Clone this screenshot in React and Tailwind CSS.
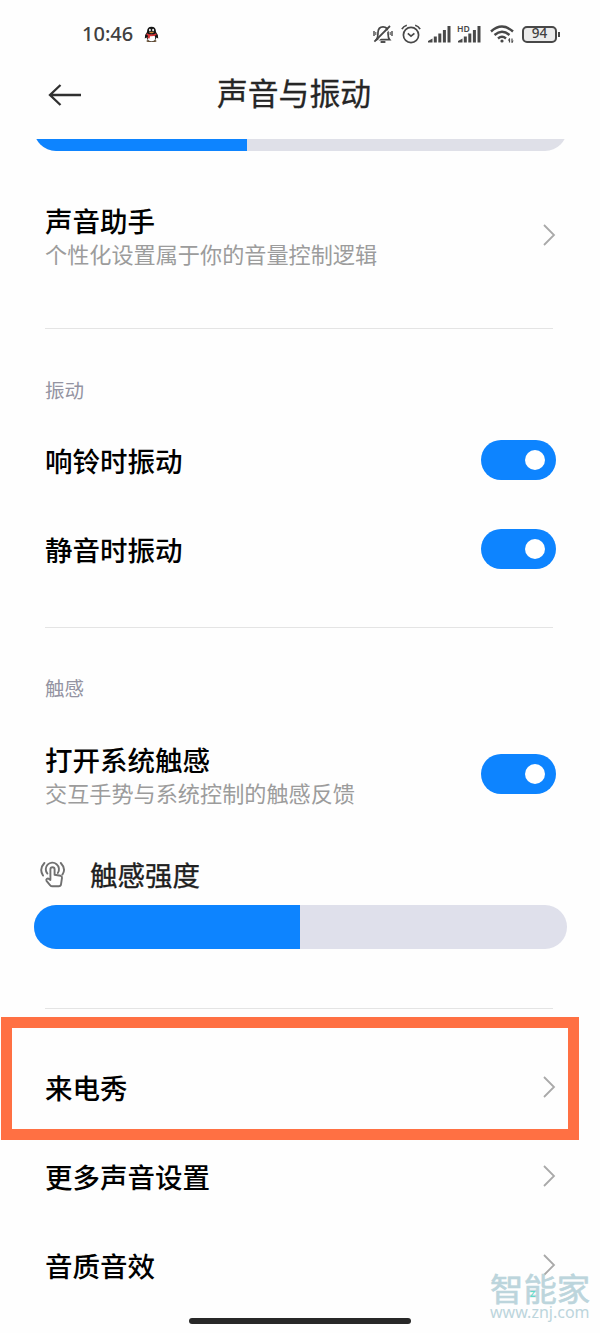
function ChevronIcon() {
  return (
    <svg className="h-[22px] w-[14px] shrink-0" viewBox="0 0 14 22" fill="none" stroke="#a9a9a9" strokeWidth="1.8">
      <path d="M2 1 L12 11 L2 21" />
    </svg>
  )
}

function MutedBellIcon() {
  return (
    <svg className="h-[20px] w-[20px]" viewBox="0 0 20 20" fill="none" stroke="#484848" strokeWidth="1.7">
      <path d="M3.4 15.6 C5.2 13.6 4.8 11.5 5 8.3 C5.2 4.6 7.4 2.8 10 2.8 C12.6 2.8 14.8 4.6 15 8.3 C15.2 11.5 14.8 13.6 16.6 15.6 Z" />
      <path d="M7.6 18 H12.4" strokeWidth="1.9" />
      <path d="M1 7 V12 M19 7 V12" strokeWidth="1.4" />
      <path d="M2.8 8 V11 M17.2 8 V11" strokeWidth="1" />
      <path d="M18.2 3.4 L3 18.6" stroke="#fff" strokeWidth="1.2" />
      <path d="M17 2 L1.4 17.6" strokeWidth="1.8" />
    </svg>
  )
}

function AlarmIcon() {
  return (
    <svg className="h-[20px] w-[20px]" viewBox="0 0 20 20" fill="none" stroke="#484848" strokeWidth="1.7">
      <circle cx="10" cy="11" r="7.6" />
      <path d="M6.8 9.4 L10 12.2 L13.4 9.4" />
      <path d="M0.9 5.2 Q2.4 2.2 5.8 1.2 M19.1 5.2 Q17.6 2.2 14.2 1.2" />
    </svg>
  )
}

function SignalIcon({ hd }) {
  return (
    <svg className="h-[20px] w-[24px] overflow-visible" viewBox="0 0 24 20" fill="#484848">
      <path d="M0 18.5 V17 L4.5 14.5 V18.5 Z" />
      <rect x="5.8" y="12.5" width="3" height="6" />
      <rect x="10.3" y="9.5" width="3" height="9" />
      <rect x="14.9" y="6" width="3" height="12.5" />
      <rect x="19.5" y="2" width="3" height="16.5" />
      {hd && (
        <text x="-1" y="7.6" fontSize="8.6" fontWeight="600" fontFamily="Noto Sans, sans-serif">HD</text>
      )}
    </svg>
  )
}

function WifiIcon() {
  return (
    <svg className="h-[20px] w-[25px]" viewBox="0 0 25 20" fill="none" stroke="#484848" strokeWidth="2.4">
      <path d="M1 7.5 Q12 -2.3 23 7.5" />
      <path d="M4.5 11 Q12 4.6 19.5 11" />
      <path d="M8 14.5 Q12 11 16 14.5" />
      <circle cx="12" cy="17" r="1.6" fill="#484848" stroke="none" />
      <path d="M19.5 14.5 V18.5 M22 14.5 V18.5" strokeWidth="1.2" />
      <path d="M18.4 16.6 L19.5 14.5 M23.1 16.6 L22 18.8" strokeWidth="1" />
    </svg>
  )
}

function PenguinIcon() {
  return (
    <svg className="h-[17px] w-[15px]" viewBox="0 0 15 17">
      <ellipse cx="5" cy="15" rx="2.6" ry="1" fill="#5c4326" />
      <ellipse cx="10" cy="15" rx="2.6" ry="1" fill="#5c4326" />
      <path d="M3 6 Q3 0.8 7.5 0.8 Q12 0.8 12 6 Q14.8 9 14.2 12.6 L12.4 11.6 Q11.6 15.4 7.5 15.4 Q3.4 15.4 2.6 11.6 L0.8 12.6 Q0.2 9 3 6 Z" fill="#151515" />
      <ellipse cx="7.5" cy="11.9" rx="3.7" ry="3.2" fill="#fff" />
      <ellipse cx="5.9" cy="4.1" rx="0.9" ry="1.3" fill="#fff" />
      <ellipse cx="9.1" cy="4.1" rx="0.9" ry="1.3" fill="#fff" />
      <ellipse cx="7.5" cy="6.5" rx="2.3" ry="0.7" fill="#c98a3a" />
      <path d="M2.8 7.2 Q7.5 9.6 12.2 7.2 L12.5 9 Q9 10.6 6 10.2 L5.6 12.5 L3.6 12.2 L4 9.6 L2.4 9 Z" fill="#d93438" />
    </svg>
  )
}

function TouchIcon() {
  return (
    <svg className="h-[28px] w-[26px]" viewBox="0 0 26 28" fill="none" stroke="#707070" strokeWidth="1.9" strokeLinecap="round" strokeLinejoin="round">
      <path d="M10.4 18.5 V8.3 A2.1 2.1 0 0 1 14.6 8.3 V13.8 L20.6 14.8 Q22.2 15.2 22 16.8 L21 23.4 Q20.7 25.3 18.8 25.3 H12.4 Q11 25.3 10 24.1 L6.5 19.8 Q5.8 18.6 7 17.7 Q8 17.1 9 17.9 L10.4 19" />
      <path d="M7.4 12.6 A6.6 6.6 0 1 1 17.8 12" />
      <path d="M4.4 2 Q-1.2 8 3 14.6 M20.8 2 Q26.4 8 22.4 13.6" />
    </svg>
  )
}

function Toggle() {
  return (
    <span className="flex h-[40px] w-[75px] shrink-0 items-center justify-end rounded-full bg-[#0d84ff] pr-[11px]">
      <span className="h-5 w-5 rounded-full bg-white" />
    </span>
  )
}

function Row({ title, subtitle, toggle }) {
  return (
    <div className="flex h-[89px] items-center justify-between pr-[44px] pl-[45px]">
      <div>
        <h2 className="text-[27.5px] leading-[36px] font-medium text-black">{title}</h2>
        {subtitle && <p className="text-[22.15px] leading-[30px] text-[#9c9c9c]">{subtitle}</p>}
      </div>
      {toggle ? <Toggle /> : <ChevronIcon />}
    </div>
  )
}

function Divider() {
  return <div className="mr-[47px] ml-[45px] h-px bg-[#e4e4e4]" />
}

function SectionLabel({ children }) {
  return <p className="pl-[45px] text-[19.5px] leading-[30px] text-[#9494a2]">{children}</p>
}

export default function App() {
  return (
    <div className="relative h-[1333px] w-[600px] overflow-hidden bg-[#fefefe] font-['Noto_Sans_CJK_SC',sans-serif]">
      <div className="flex h-[68px] items-center justify-between pr-[40px] pl-[82px]">
        <div className="flex items-center gap-[11px]">
          <span className="font-['Noto_Sans',sans-serif] text-[20px] leading-6 font-medium text-[#404040]">10:46</span>
          <PenguinIcon />
        </div>
        <div className="flex items-center">
          <MutedBellIcon />
          <span className="ml-2"><AlarmIcon /></span>
          <span className="ml-[7px]"><SignalIcon /></span>
          <span className="ml-[6px]"><SignalIcon hd /></span>
          <span className="ml-[8px]"><WifiIcon /></span>
          <span className="ml-[7px] flex h-[17px] w-[35px] items-center justify-center rounded-[5px] border-2 border-[#484848] bg-[#ececec] font-['Noto_Sans',sans-serif] text-[13.5px] leading-none font-medium text-[#404040]">
            94
          </span>
          <span className="ml-px h-[5px] w-[2px] bg-[#484848]" />
        </div>
      </div>

      <header className="flex h-[54px] items-center pl-[48px]">
        <svg className="h-[24px] w-[34px]" viewBox="0 0 34 24" fill="none" stroke="#303030" strokeWidth="2.3">
          <path d="M33 12 H2 M12.5 2 L2 12 L12.5 22" />
        </svg>
        <h1 className="ml-[135px] pb-[7px] text-[30.8px] leading-[44px] text-[#262626] [-webkit-text-stroke:0.3px_#262626]">声音与振动</h1>
      </header>

      <div className="mt-[17px] flex h-[12px] items-end overflow-hidden pr-[33px] pl-[34px]">
        <div className="flex h-[44px] w-full shrink-0 overflow-hidden rounded-full bg-[#dfe0e8]">
          <div className="w-[213px] bg-[#0d84ff]" />
        </div>
      </div>

      <div className="mt-[39px] mb-[49px]">
        <Row title="声音助手" subtitle="个性化设置属于你的音量控制逻辑" />
      </div>
      <Divider />

      <div className="mt-[46px] mb-[34px]">
        <SectionLabel>振动</SectionLabel>
        <div className="mt-[10px]">
          <Row title="响铃时振动" toggle />
          <Row title="静音时振动" toggle />
        </div>
      </div>
      <Divider />

      <div className="mt-[45px] mb-[59px]">
        <SectionLabel>触感</SectionLabel>
        <div className="mt-[26px]">
          <Row title="打开系统触感" subtitle="交互手势与系统控制的触感反馈" toggle />
        </div>
        <div className="mt-[37px] flex h-[40px] items-center pl-[40px]">
          <TouchIcon />
          <span className="ml-[24px] pb-[3px] text-[27.5px] leading-[36px] text-[#202020] [-webkit-text-stroke:0.3px_#202020]">触感强度</span>
        </div>
        <div className="mt-[10px] mr-[33px] ml-[34px] flex h-[44px] overflow-hidden rounded-full bg-[#dfe0eb]">
          <div className="w-[266px] bg-[#0d84ff]" />
        </div>
      </div>
      <Divider />

      <div className="mt-[33px]">
        <Row title="来电秀" />
        <Row title="更多声音设置" />
        <Row title="音质音效" />
      </div>

      <div className="absolute top-[1017px] left-px h-[123px] w-[578px] border-[11px] border-[#ff7043]" />

      <div className="absolute top-[1271px] left-[490px] w-[106px] text-[#bcd5dc]">
        <p className="origin-left scale-x-[1.06] text-[31.5px] leading-[32px] whitespace-nowrap [-webkit-text-stroke:0.6px_#bcd5dc]">智能家</p>
        <p className="font-['Noto_Sans',sans-serif] text-[16px] leading-[18px] whitespace-nowrap">www.znj.com</p>
        <span className="absolute top-[17px] left-[40px] font-['Noto_Sans',sans-serif] text-[9px] leading-[12px] font-semibold text-[#5fdcc8]">Z</span>
      </div>

      <div className="absolute top-[1318px] left-[189px] h-[6px] w-[222px] rounded-full bg-[#282828]" />
    </div>
  )
}
